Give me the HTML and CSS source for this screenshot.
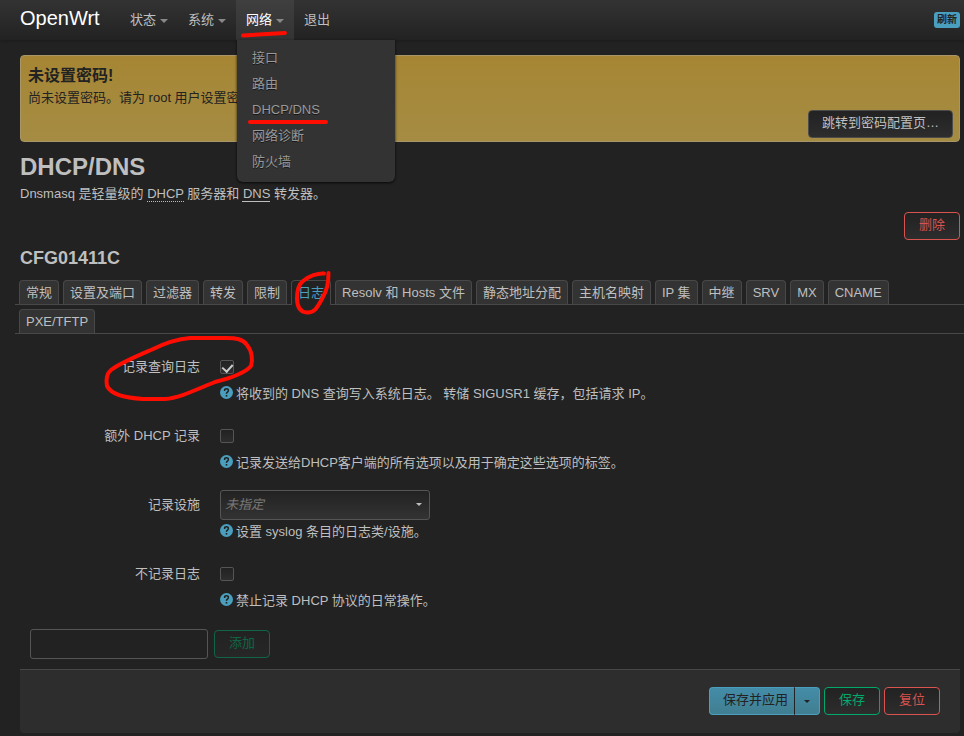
FILE: index.html
```html
<!DOCTYPE html>
<html lang="zh-CN">
<head>
<meta charset="utf-8">
<meta name="viewport" content="width=device-width, initial-scale=1">
<title>OpenWrt - DHCP/DNS</title>
<link rel="stylesheet" href="styles.css">
</head>
<body>
<svg class="defs" aria-hidden="true">
  <symbol id="help" viewBox="0 0 13 13">
    <circle cx="6.5" cy="6.5" r="6.5" fill="#4a9fbf"/>
    <path d="M4.6 5V4.4Q4.6 2.8 6.5 2.8T8.4 4.5Q8.4 5.4 7.4 6.1T6.5 7.9" fill="none" stroke="#222" stroke-width="1.5"/>
    <rect x="5.7" y="9" width="1.6" height="1.6" fill="#222"/>
  </symbol>
</svg>
<header>
  <a class="brand" href="#">OpenWrt</a>
  <nav>
    <ul class="nav">
      <li><a class="more" href="#">状态</a></li>
      <li><a class="more" href="#">系统</a></li>
      <li class="open"><a class="more" href="#">网络</a>
        <ul class="menu">
          <li><a href="#">接口</a></li>
          <li><a href="#">路由</a></li>
          <li><a href="#">DHCP/DNS</a>
            <svg class="mark mark-menu" viewBox="0 0 84 8" aria-hidden="true"><path d="M4 4H80"/></svg>
          </li>
          <li><a href="#">网络诊断</a></li>
          <li><a href="#">防火墙</a></li>
        </ul>
        <svg class="mark mark-nav" viewBox="0 0 48 10" aria-hidden="true"><path d="M3 6.500L45 4"/></svg>
      </li>
      <li><a href="#">退出</a></li>
    </ul>
  </nav>
  <button class="refresh" type="button">刷新</button>
</header>
<main>
  <section class="alert">
    <h4>未设置密码!</h4>
    <p>尚未设置密码。请为 root 用户设置密码以保护主机。</p>
    <button class="btn" type="button">跳转到密码配置页…</button>
  </section>
  <h2>DHCP/DNS</h2>
  <p class="intro">Dnsmasq 是轻量级的 <abbr>DHCP</abbr> 服务器和 <abbr>DNS</abbr> 转发器。</p>
  <div class="remove"><button class="btn red" type="button">删除</button></div>
  <h3>CFG01411C</h3>
  <ul class="tabs">
    <li><a href="#">常规</a></li>
    <li><a href="#">设置及端口</a></li>
    <li><a href="#">过滤器</a></li>
    <li><a href="#">转发</a></li>
    <li><a href="#">限制</a></li>
    <li class="active"><a href="#">日志</a>
      <svg class="mark mark-tab" viewBox="0 0 40 50" aria-hidden="true"><path d="M31 6.500C25 6 16 9 10 14C5 18 4 24 4 31C4 39 7 45 14 45.500C22 46 25 39 29 32C34 23 35.500 17 35.500 6"/></svg>
    </li>
    <li><a href="#">Resolv 和 Hosts 文件</a></li>
    <li><a href="#">静态地址分配</a></li>
    <li><a href="#">主机名映射</a></li>
    <li><a href="#">IP 集</a></li>
    <li><a href="#">中继</a></li>
    <li><a href="#">SRV</a></li>
    <li><a href="#">MX</a></li>
    <li><a href="#">CNAME</a></li>
    <li><a href="#">PXE/TFTP</a></li>
  </ul>
  <form>
    <div class="row">
      <label for="query">记录查询日志</label>
      <div class="field">
        <div class="control"><input type="checkbox" id="query" checked></div>
        <p><svg class="help" aria-hidden="true"><use href="#help"/></svg>将收到的 DNS 查询写入系统日志。 转储 SIGUSR1 缓存，包括请求 IP。</p>
      </div>
      <svg class="mark mark-row" viewBox="0 0 154 68" aria-hidden="true"><path d="M113 48C133 43 144 38 149 32C151 26 150 17 145 11C141 5 134 4 124 4H88C75 5 61 10 49 16C35 22 18 29 9 36C4 40 4 46 5 52C9 60 22 64 41 65H63C77 64 91 57 113 48"/></svg>
    </div>
    <div class="row">
      <label for="extra">额外 DHCP 记录</label>
      <div class="field">
        <div class="control"><input type="checkbox" id="extra"></div>
        <p><svg class="help" aria-hidden="true"><use href="#help"/></svg>记录发送给DHCP客户端的所有选项以及用于确定这些选项的标签。</p>
      </div>
    </div>
    <div class="row">
      <label for="facility">记录设施</label>
      <div class="field">
        <div class="control select"><select id="facility"><option>未指定</option></select></div>
        <p><svg class="help" aria-hidden="true"><use href="#help"/></svg>设置 syslog 条目的日志类/设施。</p>
      </div>
    </div>
    <div class="row">
      <label for="quiet">不记录日志</label>
      <div class="field">
        <div class="control"><input type="checkbox" id="quiet"></div>
        <p><svg class="help" aria-hidden="true"><use href="#help"/></svg>禁止记录 DHCP 协议的日常操作。</p>
      </div>
    </div>
    <div class="create">
      <input type="text" aria-label="名称">
      <button class="btn green" type="button" disabled>添加</button>
    </div>
    <div class="actions">
      <div class="split">
        <button class="btn" type="submit">保存并应用</button>
        <button class="btn arrow" type="button" aria-label="更多"></button>
      </div>
      <button class="btn green" type="button">保存</button>
      <button class="btn red" type="reset">复位</button>
    </div>
  </form>
</main>
</body>
</html>
```
FILE: styles.css
```css
* { box-sizing: border-box; }
body {
  margin: 0;
  background: #222;
  color: #bfbfbf;
  font: 13px/18px "Liberation Sans", "Noto Sans CJK SC", sans-serif;
}
h2, h3, h4, p, ul { margin: 0; padding: 0; }
ul { list-style: none; }
a { color: inherit; text-decoration: none; }
button, input, select { font: inherit; color: inherit; margin: 0; }
.defs { position: absolute; width: 0; height: 0; }

header {
  display: flex;
  align-items: center;
  height: 40px;
  padding: 0 4px 0 20px;
  background: linear-gradient(#333, #222);
  box-shadow: 0 1px 3px rgba(0, 0, 0, .2);
}
.brand { width: 100px; padding-bottom: 4px; color: #fff; font-size: 20px; line-height: 24px; }
.nav { display: flex; }
.nav > li { position: relative; }
.nav > li > a { display: flex; align-items: center; height: 40px; padding: 0 10px 1px; }
.more::after {
  content: "";
  margin: 2px 0 0 4px;
  border: 4px solid transparent;
  border-top-color: #888;
  border-bottom: 0;
}
.open { background: linear-gradient(#3f3f3f, #333); }
.open > a { color: #fff; }
.menu {
  position: absolute;
  z-index: 2;
  top: 40px;
  left: 1px;
  width: 158px;
  padding: 5px 0 7px;
  border-radius: 0 0 6px 6px;
  background: #333;
  box-shadow: 0 1px 3px rgba(0, 0, 0, .8);
  color: #999;
}
.menu li { position: relative; }
.menu a { display: block; padding: 4px 15px; text-shadow: 0 1px #181818; }
.refresh {
  margin-left: auto;
  height: 16px;
  padding: 0 3px;
  border: 0;
  border-radius: 3px;
  background: #4a9fbf;
  color: #222;
  font-size: 10px;
  font-weight: bold;
  line-height: 16px;
}

.mark {
  position: absolute;
  z-index: 3;
  fill: none;
  stroke: #ff0d00;
  stroke-width: 4;
  stroke-linecap: round;
  stroke-linejoin: round;
  pointer-events: none;
}
.mark-nav { top: 29px; left: 4px; width: 48px; height: 10px; }
.mark-menu { top: 21px; left: 9px; width: 84px; height: 8px; }
.mark-tab { top: -14px; left: 1px; width: 40px; height: 50px; }
.mark-row { top: -18px; left: 82px; width: 154px; height: 68px; }

main { padding: 15px 4px 3px 20px; }
.alert {
  display: flex;
  flex-direction: column;
  padding: 7px 6px 3px 7px;
  border: 1px solid #a89668;
  border-radius: 4px;
  background: linear-gradient(#a68634, #a58c43);
  color: #222;
}
h4 { font-size: 16px; line-height: 26px; }
.alert p { margin-bottom: 3px; }
.alert .btn { align-self: flex-end; border-color: #4b4b4b; color: #bfbfbf; }
.btn {
  height: 28px;
  padding: 0 14px 2px;
  border: 1px solid #555;
  border-radius: 4px;
  background: linear-gradient(#222, #2d2d2d);
  white-space: nowrap;
}
.alert .btn { padding: 0 13px 2px; }
.btn.red { border-color: #d9534f; color: #d9534f; }
.btn.green { border-color: #00a86b; color: #00a86b; }
.btn:disabled { opacity: .5; }
h2 { margin-top: 7px; font-size: 24px; line-height: 36px; }
abbr { border-bottom: 1px dotted #bfbfbf; text-decoration: underline dotted 1px; text-underline-offset: 3px; }
.remove { display: flex; justify-content: flex-end; margin-top: 9px; }
h3 { font-size: 18px; line-height: 36px; }
.tabs {
  display: flex;
  flex-wrap: wrap;
  column-gap: 4px;
  margin-left: -5px;
  margin-right: -4px;
  padding: 0 4px;
  background: linear-gradient(to top, #484848 1px, transparent 1px) 0 0 / 100% 29px;
}
.tabs li {
  position: relative;
  height: 24px;
  margin: 4px 0 1px;
  padding: 3px 6px 0;
  border: 1px solid #484848;
  border-bottom: 0;
  border-radius: 4px 4px 0 0;
  background: #333;
}
.tabs .active { height: 25px; margin-bottom: 0; background: #222; color: #4a9fbf; }

form { padding-top: 18px; }
.row { position: relative; display: flex; gap: 20px; min-height: 69px; }
.row > label { width: 180px; padding-top: 6px; text-align: right; }
.field { flex: 1; }
.control { display: flex; align-items: center; height: 30px; }
.field p { display: flex; align-items: center; margin-top: 3px; }
.help { width: 13px; height: 13px; margin: 0 3px 4px 0; flex: none; }
input[type="checkbox"] {
  appearance: none;
  width: 14px;
  height: 14px;
  border: 1px solid #555;
  border-radius: 2px;
  background: linear-gradient(#222, #2d2d2d);
}
input[type="checkbox"]:checked {
  display: grid;
  justify-items: center;
  padding-top: 1px;
}
input[type="checkbox"]:checked::after {
  content: "";
  width: 5px;
  height: 8px;
  border: solid #ccc;
  border-width: 0 2px 2px 0;
  transform: rotate(42deg);
}
.select { position: relative; width: 210px; }
select {
  appearance: none;
  width: 100%;
  height: 30px;
  padding: 0 4px;
  border: 1px solid #555;
  border-radius: 3px;
  background: linear-gradient(#222, #333);
  color: #777;
  font-style: italic;
}
.select::after, .arrow::after {
  content: "";
  border: 3px solid transparent;
  border-top-color: currentColor;
  border-bottom: 0;
}
.select::after { position: absolute; right: 8px; top: 13px; }
.create { display: flex; align-items: center; gap: 6px; padding: 1px 10px 10px; }
.create input {
  width: 178px;
  height: 30px;
  border: 1px solid #555;
  border-radius: 3px;
  background: #222;
}
.actions {
  display: flex;
  justify-content: flex-end;
  gap: 4px;
  padding: 17px 20px 18px;
  border-top: 1px solid #484848;
  border-radius: 0 0 4px 4px;
  background: #2d2d2d;
}
.split { display: flex; }
.split .btn { border-color: #4a9fbf; background: linear-gradient(#438ca8, #417f91); color: #222; }
.split .btn:first-child { border-right: 1px solid #222; border-radius: 4px 0 0 4px; padding: 0 6px 2px 13px; }
.split .arrow { display: flex; align-items: center; border-left: 0; border-radius: 0 4px 4px 0; padding: 0 9px; }
```
